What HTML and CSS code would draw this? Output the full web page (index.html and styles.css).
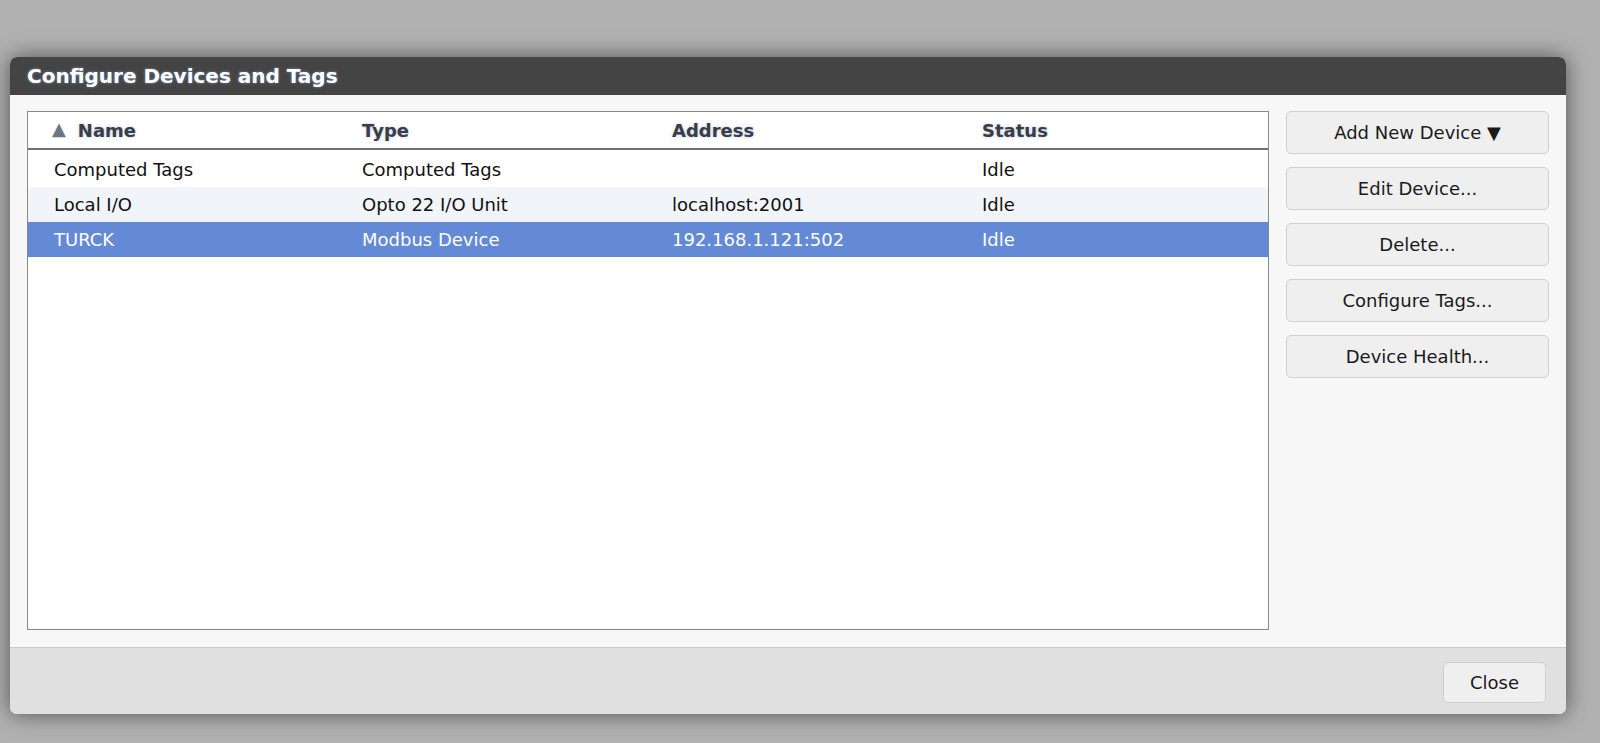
FILE: index.html
```html
<!DOCTYPE html>
<html lang="en">
<head>
    <meta charset="UTF-8">
    <meta name="viewport" content="width=device-width, initial-scale=1.0">
    <title>Configure Devices and Tags</title>
    <link rel="stylesheet" href="styles.css">
</head>
<body>
    <div class="dialog">
        <div class="dialog-title">Configure Devices and Tags</div>

        <div class="dialog-body">
            <div class="device-list">
                <table class="devices">
                    <thead>
                        <tr>
                            <th><span class="sort-arrow">&#9650;</span>Name</th>
                            <th>Type</th>
                            <th>Address</th>
                            <th>Status</th>
                        </tr>
                    </thead>
                    <tbody>
                        <tr>
                            <td>Computed Tags</td>
                            <td>Computed Tags</td>
                            <td></td>
                            <td>Idle</td>
                        </tr>
                        <tr class="alt">
                            <td>Local I/O</td>
                            <td>Opto 22 I/O Unit</td>
                            <td>localhost:2001</td>
                            <td>Idle</td>
                        </tr>
                        <tr class="selected">
                            <td>TURCK</td>
                            <td>Modbus Device</td>
                            <td>192.168.1.121:502</td>
                            <td>Idle</td>
                        </tr>
                    </tbody>
                </table>
            </div>

            <div class="actions">
                <button class="btn">Add New Device &#9660;</button>
                <button class="btn">Edit Device...</button>
                <button class="btn">Delete...</button>
                <button class="btn">Configure Tags...</button>
                <button class="btn">Device Health...</button>
            </div>
        </div>

        <div class="dialog-footer">
            <button class="btn close-btn">Close</button>
        </div>
    </div>
</body>
</html>
```

FILE: styles.css
```css
body {
    margin: 0;
    background: #b1b1b1;
    font-family: 'DejaVu Sans', sans-serif;
    height: 743px;
    overflow: hidden;
}

.dialog {
    margin: 57px 0 0 10px;
    width: 1556px;
    height: 657px;
    display: flex;
    flex-direction: column;
    background: #f7f7f7;
    border-radius: 7px;
    box-shadow: 0 0 22px rgba(0,0,0,0.55);
    overflow: hidden;
}

.dialog-title {
    height: 38px;
    background: #444444;
    color: white;
    font-weight: bold;
    font-size: 20px;
    line-height: 38px;
    padding-left: 17px;
    text-shadow: 0 0 3px rgba(150,190,255,0.6);
}

.dialog-body {
    flex: 1;
    display: flex;
    gap: 17px;
    padding: 16px 17px 17px 17px;
    min-height: 0;
}

.device-list {
    flex: 1;
    background: white;
    border: 1px solid #888;
}

.devices {
    width: 100%;
    border-collapse: collapse;
    table-layout: fixed;
    font-size: 18px;
    color: #111;
}

.devices th {
    text-align: left;
    height: 36px;
    padding: 0 0 0 24px;
    font-weight: bold;
    color: #3d3d3d;
    text-shadow: 0 0 3px rgba(150,180,255,0.8);
    border-bottom: 2px solid #707070;
}

.sort-arrow {
    color: #6b7584;
    font-size: 18px;
    margin-right: 12px;
    text-shadow: none;
    position: relative;
    top: -2px;
}

.devices tbody tr:first-child td {
    padding-top: 2px;
}

.devices td {
    height: 35px;
    padding: 0 0 0 24px;
    white-space: nowrap;
}

.devices td:first-child {
    padding-left: 26px;
}

.devices tr.alt {
    background: #f1f5fa;
}

.devices tr.selected {
    background: #648ad6;
    color: white;
}

.actions {
    width: 263px;
    display: flex;
    flex-direction: column;
    gap: 13px;
}

.btn {
    height: 43px;
    background: #efefef;
    border: 1px solid #cfcfcf;
    border-radius: 5px;
    font-family: inherit;
    font-size: 18px;
    color: #1a1a1a;
    cursor: pointer;
}

.btn:hover {
    background: #e6e6e6;
}

.dialog-footer {
    height: 67px;
    background: #e0e0e0;
    border-top: 1px solid #cbcbcb;
    display: flex;
    justify-content: flex-end;
    align-items: flex-start;
    padding: 14px 20px 0 0;
    box-sizing: border-box;
}

.close-btn {
    width: 103px;
    height: 41px;
}
```
